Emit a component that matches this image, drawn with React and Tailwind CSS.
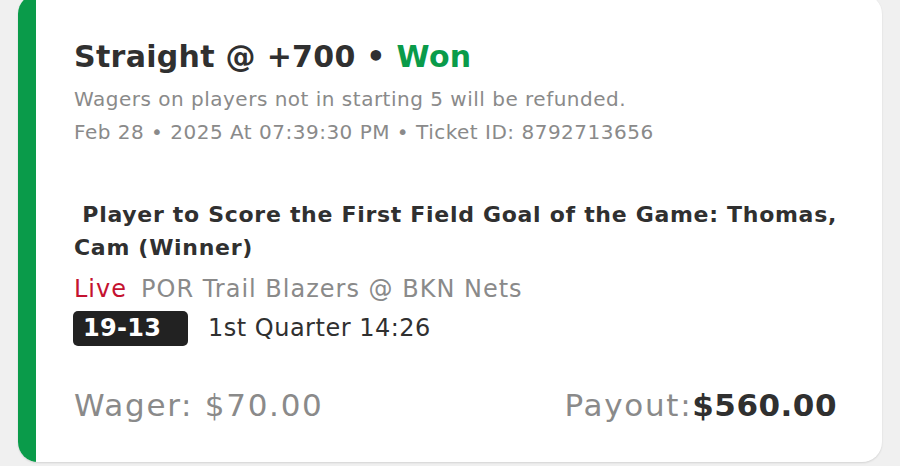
export default function App() {
  return (
    <div className="h-[466px] w-[900px] overflow-hidden bg-[#f0f0f0] font-['DejaVu_Sans',sans-serif]">
      <div className="ml-[18px] -mt-[6px] flex h-[468px] w-[864px] overflow-hidden rounded-[20px] bg-white shadow-[0_1px_2px_rgba(0,0,0,0.12)]">
        <div className="w-[18px] shrink-0 bg-[#0a9b4a]" />
        <div className="flex flex-1 flex-col pl-[38px] pr-[20px] pt-[45px]">
          <div className="text-[30px] font-bold leading-[36px] tracking-[0.3px] text-[#303030]">
            Straight @ +700 • <span className="text-[#0a9b4a]">Won</span>
          </div>
          <div className="mt-[8px] text-[20px] leading-[33px] tracking-[0.5px] text-[#8a8a8a]">
            Wagers on players not in starting 5 will be refunded.
          </div>
          <div className="text-[20px] leading-[33px] tracking-[0.5px] text-[#8a8a8a]">
            Feb 28 • 2025 At 07:39:30 PM • Ticket ID: 8792713656
          </div>
          <div className="mt-[49px] whitespace-pre-wrap text-[22px] font-bold leading-[33px] tracking-[0.7px] text-[#303030]">
            {' Player to Score the First Field Goal of the Game: Thomas, Cam (Winner)'}
          </div>
          <div className="mt-[10px] text-[24px] leading-[30px] tracking-[1px]">
            <span className="text-[#c41230]">Live</span>
            <span className="ml-[14px] text-[#8a8a8a]">POR Trail Blazers @ BKN Nets</span>
          </div>
          <div className="mt-[6px] flex items-center">
            <div className="-ml-[1px] flex h-[35px] w-[115px] items-center rounded-[5px] bg-[#222] pl-[10px] text-[24px] font-bold tracking-[0.3px] text-white">
              19-13
            </div>
            <div className="ml-[20px] text-[24px] tracking-[0.5px] text-[#303030]">1st Quarter 14:26</div>
          </div>
          <div className="mr-[27px] mt-[39px] flex items-center justify-between text-[31px] leading-[40px] tracking-[1.7px]">
            <div className="text-[#8a8a8a]">Wager: $70.00</div>
            <div className="-mr-[2px]">
              <span className="text-[#8a8a8a]">Payout:</span>
              <span className="font-bold tracking-[0.5px] text-[#303030]">$560.00</span>
            </div>
          </div>
        </div>
      </div>
    </div>
  );
}
